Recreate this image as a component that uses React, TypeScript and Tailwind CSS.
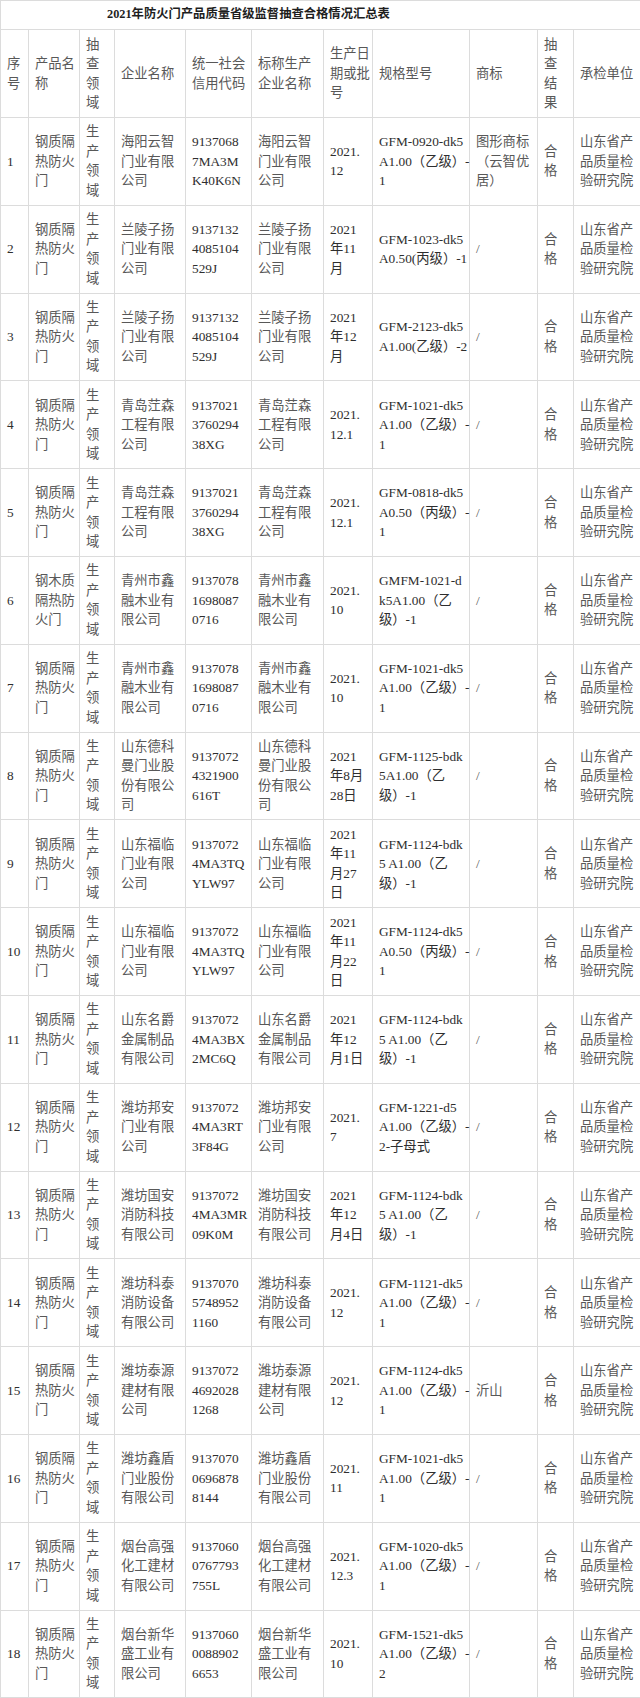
type Row = {
  product: string[];
  company: string[];
  code: string[];
  maker: string[];
  date: string[];
  spec: string[];
  brand: string[];
};

const yi = ["山东省产", "品质量检", "验研究院"];
const door = ["钢质隔", "热防火", "门"];

const rows: Row[] = [
  { product: door, company: ["海阳云智", "门业有限", "公司"], code: ["9137068", "7MA3M", "K40K6N"], maker: ["海阳云智", "门业有限", "公司"], date: ["2021.", "12"], spec: ["GFM-0920-dk5", "A1.00（乙级）-", "1"], brand: ["图形商标", "（云智优", "居）"] },
  { product: door, company: ["兰陵子扬", "门业有限", "公司"], code: ["9137132", "4085104", "529J"], maker: ["兰陵子扬", "门业有限", "公司"], date: ["2021", "年11", "月"], spec: ["GFM-1023-dk5", "A0.50(丙级）-1"], brand: ["/"] },
  { product: door, company: ["兰陵子扬", "门业有限", "公司"], code: ["9137132", "4085104", "529J"], maker: ["兰陵子扬", "门业有限", "公司"], date: ["2021", "年12", "月"], spec: ["GFM-2123-dk5", "A1.00(乙级）-2"], brand: ["/"] },
  { product: door, company: ["青岛茳森", "工程有限", "公司"], code: ["9137021", "3760294", "38XG"], maker: ["青岛茳森", "工程有限", "公司"], date: ["2021.", "12.1"], spec: ["GFM-1021-dk5", "A1.00（乙级）-", "1"], brand: ["/"] },
  { product: door, company: ["青岛茳森", "工程有限", "公司"], code: ["9137021", "3760294", "38XG"], maker: ["青岛茳森", "工程有限", "公司"], date: ["2021.", "12.1"], spec: ["GFM-0818-dk5", "A0.50（丙级）-", "1"], brand: ["/"] },
  { product: ["钢木质", "隔热防", "火门"], company: ["青州市鑫", "融木业有", "限公司"], code: ["9137078", "1698087", "0716"], maker: ["青州市鑫", "融木业有", "限公司"], date: ["2021.", "10"], spec: ["GMFM-1021-d", "k5A1.00（乙", "级）-1"], brand: ["/"] },
  { product: door, company: ["青州市鑫", "融木业有", "限公司"], code: ["9137078", "1698087", "0716"], maker: ["青州市鑫", "融木业有", "限公司"], date: ["2021.", "10"], spec: ["GFM-1021-dk5", "A1.00（乙级）-", "1"], brand: ["/"] },
  { product: door, company: ["山东德科", "曼门业股", "份有限公", "司"], code: ["9137072", "4321900", "616T"], maker: ["山东德科", "曼门业股", "份有限公", "司"], date: ["2021", "年8月", "28日"], spec: ["GFM-1125-bdk", "5A1.00（乙", "级）-1"], brand: ["/"] },
  { product: door, company: ["山东福临", "门业有限", "公司"], code: ["9137072", "4MA3TQ", "YLW97"], maker: ["山东福临", "门业有限", "公司"], date: ["2021", "年11", "月27", "日"], spec: ["GFM-1124-bdk", "5 A1.00（乙", "级）-1"], brand: ["/"] },
  { product: door, company: ["山东福临", "门业有限", "公司"], code: ["9137072", "4MA3TQ", "YLW97"], maker: ["山东福临", "门业有限", "公司"], date: ["2021", "年11", "月22", "日"], spec: ["GFM-1124-dk5", "A0.50（丙级）-", "1"], brand: ["/"] },
  { product: door, company: ["山东名爵", "金属制品", "有限公司"], code: ["9137072", "4MA3BX", "2MC6Q"], maker: ["山东名爵", "金属制品", "有限公司"], date: ["2021", "年12", "月1日"], spec: ["GFM-1124-bdk", "5 A1.00（乙", "级）-1"], brand: ["/"] },
  { product: door, company: ["潍坊邦安", "门业有限", "公司"], code: ["9137072", "4MA3RT", "3F84G"], maker: ["潍坊邦安", "门业有限", "公司"], date: ["2021.", "7"], spec: ["GFM-1221-d5", "A1.00（乙级）-", "2-子母式"], brand: ["/"] },
  { product: door, company: ["潍坊国安", "消防科技", "有限公司"], code: ["9137072", "4MA3MR", "09K0M"], maker: ["潍坊国安", "消防科技", "有限公司"], date: ["2021", "年12", "月4日"], spec: ["GFM-1124-bdk", "5 A1.00（乙", "级）-1"], brand: ["/"] },
  { product: door, company: ["潍坊科泰", "消防设备", "有限公司"], code: ["9137070", "5748952", "1160"], maker: ["潍坊科泰", "消防设备", "有限公司"], date: ["2021.", "12"], spec: ["GFM-1121-dk5", "A1.00（乙级）-", "1"], brand: ["/"] },
  { product: door, company: ["潍坊泰源", "建材有限", "公司"], code: ["9137072", "4692028", "1268"], maker: ["潍坊泰源", "建材有限", "公司"], date: ["2021.", "12"], spec: ["GFM-1124-dk5", "A1.00（乙级）-", "1"], brand: ["沂山"] },
  { product: door, company: ["潍坊鑫盾", "门业股份", "有限公司"], code: ["9137070", "0696878", "8144"], maker: ["潍坊鑫盾", "门业股份", "有限公司"], date: ["2021.", "11"], spec: ["GFM-1021-dk5", "A1.00（乙级）-", "1"], brand: ["/"] },
  { product: door, company: ["烟台高强", "化工建材", "有限公司"], code: ["9137060", "0767793", "755L"], maker: ["烟台高强", "化工建材", "有限公司"], date: ["2021.", "12.3"], spec: ["GFM-1020-dk5", "A1.00（乙级）-", "1"], brand: ["/"] },
  { product: door, company: ["烟台新华", "盛工业有", "限公司"], code: ["9137060", "0088902", "6653"], maker: ["烟台新华", "盛工业有", "限公司"], date: ["2021.", "10"], spec: ["GFM-1521-dk5", "A1.00（乙级）-", "2"], brand: ["/"] },
];

function Lines({ items }: { items: string[] }) {
  return (
    <>
      {items.map((t, i) => (
        <span key={i} className="block whitespace-nowrap">
          {t}
        </span>
      ))}
    </>
  );
}

const cell = "border border-[#dcdcdc] px-[6px] align-middle text-left";
const cn = cell + " text-[#585858]";

export default function App() {
  const header = [
    ["序", "号"],
    ["产品名", "称"],
    ["抽", "查", "领", "域"],
    ["企业名称"],
    ["统一社会", "信用代码"],
    ["标称生产", "企业名称"],
    ["生产日", "期或批", "号"],
    ["规格型号"],
    ["商标"],
    ["抽", "查", "结", "果"],
    ["承检单位"],
  ];

  return (
    <div className="w-[640px] bg-white text-[#2e2e2e] text-[13.3px] leading-[19.5px] font-['Liberation_Serif','Noto_Sans_CJK_SC',serif]">
      <table className="w-[640px] table-fixed border-collapse">
        <colgroup>
          <col className="w-[28px]" />
          <col className="w-[51px]" />
          <col className="w-[35px]" />
          <col className="w-[71px]" />
          <col className="w-[66px]" />
          <col className="w-[72px]" />
          <col className="w-[49px]" />
          <col className="w-[97px]" />
          <col className="w-[68px]" />
          <col className="w-[36px]" />
          <col className="w-[67px]" />
        </colgroup>
        <tbody>
          <tr className="h-[29px]">
            <td colSpan={11} className="border border-[#dcdcdc] pl-[106px] align-middle text-[12.3px] font-bold text-[#1e1e1e]">
              2021年防火门产品质量省级监督抽查合格情况汇总表
            </td>
          </tr>
          <tr className="h-[88px]">
            {header.map((h, i) => (
              <td key={i} className={cn}>
                <Lines items={h} />
              </td>
            ))}
          </tr>
          {rows.map((r, i) => (
            <tr key={i} className="h-[87.8px]">
              <td className={cell}>{i + 1}</td>
              <td className={cn}>
                <Lines items={r.product} />
              </td>
              <td className={cn}>
                <Lines items={["生", "产", "领", "域"]} />
              </td>
              <td className={cn}>
                <Lines items={r.company} />
              </td>
              <td className={cell}>
                <Lines items={r.code} />
              </td>
              <td className={cn}>
                <Lines items={r.maker} />
              </td>
              <td className={cell}>
                <Lines items={r.date} />
              </td>
              <td className={cell}>
                <Lines items={r.spec} />
              </td>
              <td className={cn}>
                <Lines items={r.brand} />
              </td>
              <td className={cn}>
                <Lines items={["合", "格"]} />
              </td>
              <td className={cn}>
                <Lines items={yi} />
              </td>
            </tr>
          ))}
        </tbody>
      </table>
    </div>
  );
}
